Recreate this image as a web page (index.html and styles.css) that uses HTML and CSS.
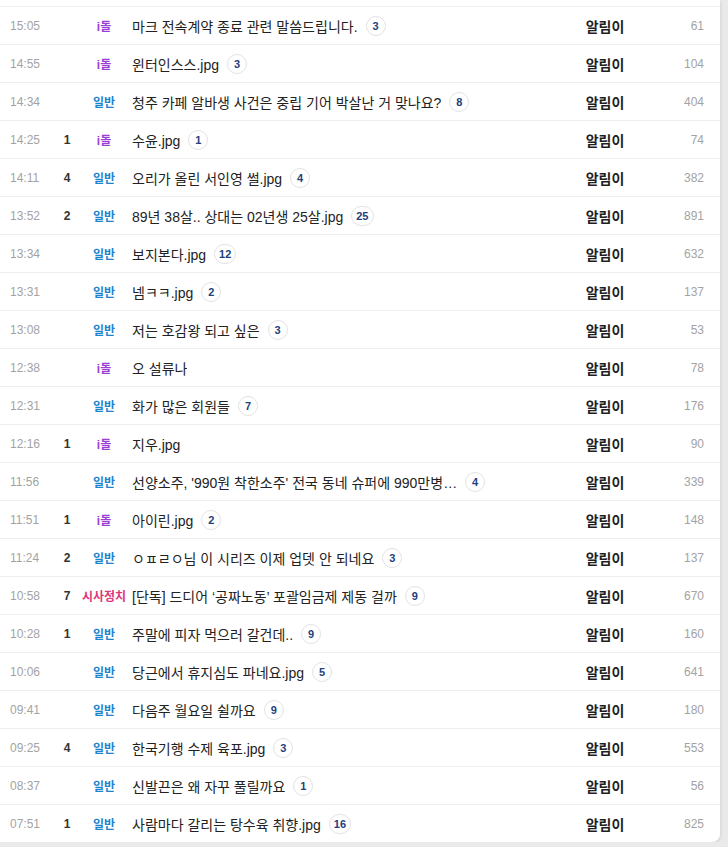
FILE: index.html
```html
<!DOCTYPE html>
<html lang="ko">
<head>
<meta charset="utf-8">
<title>게시판</title>
<link rel="stylesheet" href="styles.css">
</head>
<body>
<div class="card">
  <div class="top"></div>
  <div class="row"><span class="time">15:05</span><span class="num"></span><span class="cat idol">i돌</span><span class="title"><span class="text">마크 전속계약 종료 관련 말씀드립니다.</span><span class="cmt">3</span></span><span class="author">알림이</span><span class="views">61</span></div>
  <div class="row"><span class="time">14:55</span><span class="num"></span><span class="cat idol">i돌</span><span class="title"><span class="text">윈터인스스.jpg</span><span class="cmt">3</span></span><span class="author">알림이</span><span class="views">104</span></div>
  <div class="row"><span class="time">14:34</span><span class="num"></span><span class="cat gen">일반</span><span class="title"><span class="text">청주 카페 알바생 사건은 중립 기어 박살난 거 맞나요?</span><span class="cmt">8</span></span><span class="author">알림이</span><span class="views">404</span></div>
  <div class="row"><span class="time">14:25</span><span class="num">1</span><span class="cat idol">i돌</span><span class="title"><span class="text">수윤.jpg</span><span class="cmt">1</span></span><span class="author">알림이</span><span class="views">74</span></div>
  <div class="row"><span class="time">14:11</span><span class="num">4</span><span class="cat gen">일반</span><span class="title"><span class="text">오리가 올린 서인영 썰.jpg</span><span class="cmt">4</span></span><span class="author">알림이</span><span class="views">382</span></div>
  <div class="row"><span class="time">13:52</span><span class="num">2</span><span class="cat gen">일반</span><span class="title"><span class="text">89년 38살.. 상대는 02년생 25살.jpg</span><span class="cmt">25</span></span><span class="author">알림이</span><span class="views">891</span></div>
  <div class="row"><span class="time">13:34</span><span class="num"></span><span class="cat gen">일반</span><span class="title"><span class="text">보지본다.jpg</span><span class="cmt">12</span></span><span class="author">알림이</span><span class="views">632</span></div>
  <div class="row"><span class="time">13:31</span><span class="num"></span><span class="cat gen">일반</span><span class="title"><span class="text">넴ㅋㅋ.jpg</span><span class="cmt">2</span></span><span class="author">알림이</span><span class="views">137</span></div>
  <div class="row"><span class="time">13:08</span><span class="num"></span><span class="cat gen">일반</span><span class="title"><span class="text">저는 호감왕 되고 싶은</span><span class="cmt">3</span></span><span class="author">알림이</span><span class="views">53</span></div>
  <div class="row"><span class="time">12:38</span><span class="num"></span><span class="cat idol">i돌</span><span class="title"><span class="text">오 설류나</span></span><span class="author">알림이</span><span class="views">78</span></div>
  <div class="row"><span class="time">12:31</span><span class="num"></span><span class="cat gen">일반</span><span class="title"><span class="text">화가 많은 회원들</span><span class="cmt">7</span></span><span class="author">알림이</span><span class="views">176</span></div>
  <div class="row"><span class="time">12:16</span><span class="num">1</span><span class="cat idol">i돌</span><span class="title"><span class="text">지우.jpg</span></span><span class="author">알림이</span><span class="views">90</span></div>
  <div class="row"><span class="time">11:56</span><span class="num"></span><span class="cat gen">일반</span><span class="title"><span class="text">선양소주, '990원 착한소주' 전국 동네 슈퍼에 990만병…</span><span class="cmt">4</span></span><span class="author">알림이</span><span class="views">339</span></div>
  <div class="row"><span class="time">11:51</span><span class="num">1</span><span class="cat idol">i돌</span><span class="title"><span class="text">아이린.jpg</span><span class="cmt">2</span></span><span class="author">알림이</span><span class="views">148</span></div>
  <div class="row"><span class="time">11:24</span><span class="num">2</span><span class="cat gen">일반</span><span class="title"><span class="text">ㅇㅍㄹㅇ님 이 시리즈 이제 업뎃 안 되네요</span><span class="cmt">3</span></span><span class="author">알림이</span><span class="views">137</span></div>
  <div class="row"><span class="time">10:58</span><span class="num">7</span><span class="cat pol">시사정치</span><span class="title"><span class="text">[단독] 드디어 ‘공짜노동’ 포괄임금제 제동 걸까</span><span class="cmt">9</span></span><span class="author">알림이</span><span class="views">670</span></div>
  <div class="row"><span class="time">10:28</span><span class="num">1</span><span class="cat gen">일반</span><span class="title"><span class="text">주말에 피자 먹으러 갈건데..</span><span class="cmt">9</span></span><span class="author">알림이</span><span class="views">160</span></div>
  <div class="row"><span class="time">10:06</span><span class="num"></span><span class="cat gen">일반</span><span class="title"><span class="text">당근에서 휴지심도 파네요.jpg</span><span class="cmt">5</span></span><span class="author">알림이</span><span class="views">641</span></div>
  <div class="row"><span class="time">09:41</span><span class="num"></span><span class="cat gen">일반</span><span class="title"><span class="text">다음주 월요일 쉴까요</span><span class="cmt">9</span></span><span class="author">알림이</span><span class="views">180</span></div>
  <div class="row"><span class="time">09:25</span><span class="num">4</span><span class="cat gen">일반</span><span class="title"><span class="text">한국기행 수제 육포.jpg</span><span class="cmt">3</span></span><span class="author">알림이</span><span class="views">553</span></div>
  <div class="row"><span class="time">08:37</span><span class="num"></span><span class="cat gen">일반</span><span class="title"><span class="text">신발끈은 왜 자꾸 풀릴까요</span><span class="cmt">1</span></span><span class="author">알림이</span><span class="views">56</span></div>
  <div class="row"><span class="time">07:51</span><span class="num">1</span><span class="cat gen">일반</span><span class="title"><span class="text">사람마다 갈리는 탕수육 취향.jpg</span><span class="cmt">16</span></span><span class="author">알림이</span><span class="views">825</span></div>
</div>
</body>
</html>
```
FILE: styles.css
```css
html, body {
  margin: 0;
  padding: 0;
  background: #eaeaea;
}
body {
  font-family: "Liberation Sans", "Noto Sans CJK KR", sans-serif;
  color: #222;
}
.card {
  width: 720px;
  background: #fff;
  border-radius: 0 0 8px 0;
  box-shadow: 0 1px 4px rgba(0, 0, 0, 0.14);
}
.top {
  height: 6px;
}
.row {
  display: grid;
  grid-template-columns: 56px 22px 52px 430px 90px 54px;
  align-items: center;
  height: 38px;
  box-sizing: border-box;
  border-top: 1px solid #eeeeee;
  padding-right: 16px;
}
.time {
  padding-left: 10px;
  font-size: 12px;
  color: #a3a3a3;
}
.num {
  text-align: center;
  font-size: 12px;
  font-weight: bold;
  color: #333;
}
.cat {
  text-align: center;
  font-size: 12px;
  font-weight: bold;
}
.idol { color: #9a3fd6; }
.gen { color: #1d84cf; }
.pol { color: #e2347a; }
.title {
  display: flex;
  align-items: center;
  gap: 8px;
  padding-left: 2px;
  min-width: 0;
}
.text {
  font-size: 14px;
  color: #222;
  white-space: nowrap;
  overflow: hidden;
  text-overflow: ellipsis;
  min-width: 0;
}
.cmt {
  flex: none;
  min-width: 20px;
  height: 20px;
  box-sizing: border-box;
  padding: 0 4px;
  border: 1px solid #e3e3e3;
  border-radius: 10px;
  display: flex;
  align-items: center;
  justify-content: center;
  font-size: 11px;
  font-weight: bold;
  color: #233f7c;
}
.author {
  text-align: center;
  font-size: 14px;
  font-weight: bold;
  color: #1f1f1f;
}
.views {
  text-align: right;
  font-size: 12px;
  color: #a3a3a3;
}
```
